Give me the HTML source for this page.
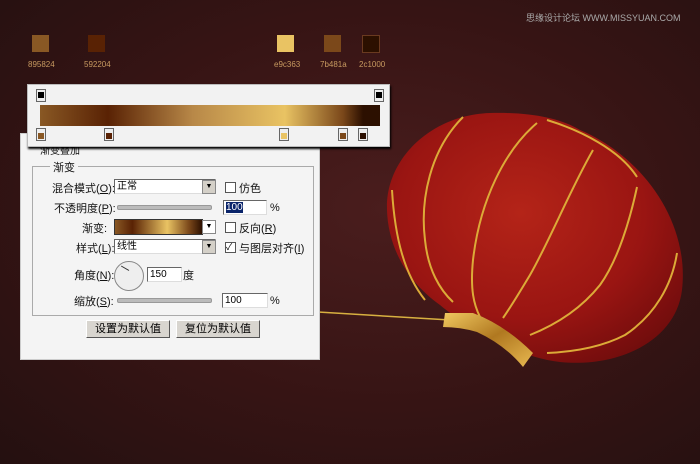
<!DOCTYPE html>
<html><head><meta charset="utf-8"><style>
body{margin:0;width:700px;height:464px;overflow:hidden;background:radial-gradient(ellipse at 55% 45%,#4a1d1d 0%,#361414 55%,#241010 100%);font-family:"Liberation Sans","Noto Sans CJK SC",sans-serif;position:relative}
.a{position:absolute}
.sw{width:17px;height:17px}
.lb{font-size:8px;color:#c89a60}
.t{font-size:11px;color:#111;position:absolute;white-space:nowrap}
.in{position:absolute;background:#fff;border:1px solid #666;border-right-color:#ddd;border-bottom-color:#ddd;font-size:10px;line-height:13px;padding-left:2px}
.dd{position:absolute;width:12px;height:12px;background:#d4d0c8;border:1px solid #888;font-size:7px;text-align:center;line-height:12px}
.cb{position:absolute;width:9px;height:9px;border:1px solid #555;background:#fff;font-size:9px;line-height:9px}
.sl{position:absolute;height:3px;background:#bbb;border:1px solid #999;border-radius:2px}
.btn{position:absolute;height:16px;background:#d8d5cf;border:1px solid #fff;border-right-color:#555;border-bottom-color:#555;font-size:11px;text-align:center;line-height:16px}
.stop{position:absolute;width:8px;height:11px;background:#eee;border:1px solid #666}
.stop i{position:absolute;left:1px;top:4px;width:6px;height:6px}
</style></head><body>
<div class="a sw" style="left:32px;top:35px;background:#895824"></div><div class="a lb" style="left:28px;top:60px">895824</div>
<div class="a sw" style="left:88px;top:35px;background:#592204"></div><div class="a lb" style="left:84px;top:60px">592204</div>
<div class="a sw" style="left:277px;top:35px;background:#e9c363"></div><div class="a lb" style="left:274px;top:60px">e9c363</div>
<div class="a sw" style="left:324px;top:35px;background:#7b481a"></div><div class="a lb" style="left:320px;top:60px">7b481a</div>
<div class="a sw" style="left:362px;top:35px;background:#2c1000;border:1px solid #6a3a20;width:16px;height:16px"></div><div class="a lb" style="left:359px;top:60px">2c1000</div>
<div class="a" style="left:526px;top:11px;font-size:9px;color:#aaa">思缘设计论坛 WWW.MISSYUAN.COM</div>

<svg class="a" style="left:0;top:0" width="700" height="464">
<defs>
<radialGradient id="r" cx="0.45" cy="0.4" r="0.7"><stop offset="0" stop-color="#b42418"/><stop offset="0.6" stop-color="#9a1512"/><stop offset="1" stop-color="#6e0c0c"/></radialGradient>
<linearGradient id="g" x1="0" y1="0" x2="1" y2="1"><stop offset="0" stop-color="#f0c860"/><stop offset="0.5" stop-color="#b07820"/><stop offset="1" stop-color="#e8b850"/></linearGradient>
</defs>
<line x1="318" y1="312" x2="450" y2="320" stroke="#d8b040" stroke-width="1.5"/>
<path d="M387,210 C385,160 430,115 490,113 C530,112 560,118 580,130 C640,155 690,220 682,290 C676,340 620,368 560,362 C520,358 470,330 440,305 C405,280 388,245 387,210 Z" fill="url(#r)"/>
<g fill="none" stroke="#dcaa38" stroke-width="2">
<path d="M547,120 C580,130 620,150 637,177"/>
<path d="M392,190 C395,240 405,275 425,300"/>
<path d="M463,117 C430,150 420,200 425,240 C428,270 440,290 453,302"/>
<path d="M537,123 C505,150 480,200 473,260 C470,290 474,305 480,317"/>
<path d="M593,150 C570,190 550,240 530,275 C518,295 510,308 503,318"/>
<path d="M637,187 C630,220 618,260 600,285 C580,310 555,325 530,335"/>
<path d="M677,253 C672,285 655,315 625,335 C600,348 570,352 547,353"/>
</g>
<path d="M445,313 L473,313 Q505,325 533,353 L523,367 Q505,345 477,332 Q460,327 443,327 Z" fill="url(#g)"/>
</svg>

<div class="a" style="left:20px;top:133px;width:298px;height:225px;background:#f4f4f4;border:1px solid #ccc"></div>
<div class="t" style="left:40px;top:142px;font-size:10px">渐变叠加</div>
<div class="a" style="left:32px;top:166px;width:280px;height:148px;border:1px solid #aaa"></div>
<div class="t" style="left:50px;top:159px;background:#f4f4f4;padding:0 3px">渐变</div>
<div class="t" style="left:52px;top:180px">混合模式(<u>O</u>):</div>
<div class="in" style="left:114px;top:179px;width:98px">正常</div><div class="dd" style="left:202px;top:180px">▼</div>
<div class="cb" style="left:225px;top:182px"></div><div class="t" style="left:239px;top:180px">仿色</div>
<div class="t" style="left:54px;top:200px">不透明度(<u>P</u>):</div>
<div class="sl" style="left:117px;top:205px;width:93px"></div>
<div class="in" style="left:223px;top:200px;width:40px"><span style="background:#0a246a;color:#fff">100</span></div><div class="t" style="left:270px;top:202px">%</div>
<div class="t" style="left:82px;top:220px">渐变:</div>
<div class="a" style="left:114px;top:219px;width:87px;height:14px;border:1px solid #333;background:linear-gradient(90deg,#895824,#592204 20%,#e9c363 60%,#7b481a 85%,#2c1000)"></div>
<div class="dd" style="left:202px;top:220px;background:#fff">▼</div>
<div class="cb" style="left:225px;top:222px"></div><div class="t" style="left:239px;top:220px">反向(<u>R</u>)</div>
<div class="t" style="left:76px;top:240px">样式(<u>L</u>):</div>
<div class="in" style="left:114px;top:239px;width:98px">线性</div><div class="dd" style="left:202px;top:240px">▼</div>
<div class="cb" style="left:225px;top:242px">✓</div><div class="t" style="left:239px;top:240px">与图层对齐(<u>I</u>)</div>
<div class="t" style="left:74px;top:267px">角度(<u>N</u>):</div>
<div class="a" style="left:114px;top:261px;width:28px;height:28px;border-radius:50%;border:1px solid #888;background:#eee"></div>
<div class="a" style="left:120px;top:270px;width:9px;height:1px;background:#333;transform:rotate(30deg);transform-origin:right"></div>
<div class="in" style="left:147px;top:267px;width:31px">150</div><div class="t" style="left:183px;top:267px">度</div>
<div class="t" style="left:74px;top:293px">缩放(<u>S</u>):</div>
<div class="sl" style="left:117px;top:298px;width:93px"></div>
<div class="in" style="left:222px;top:293px;width:42px">100</div><div class="t" style="left:270px;top:295px">%</div>
<div class="btn" style="left:86px;top:320px;width:82px">设置为默认值</div>
<div class="btn" style="left:176px;top:320px;width:82px">复位为默认值</div>

<div class="a" style="left:27px;top:84px;width:361px;height:61px;background:#f2f2f2;border:1px solid #bbb;box-shadow:1px 2px 2px #000"></div>
<div class="a" style="left:40px;top:105px;width:340px;height:21px;background:linear-gradient(90deg,#895824 0%,#592204 20%,#b88848 45%,#e9c363 72%,#7b481a 89%,#2c1000 95%,#2c1000)"></div>
<div class="stop" style="left:36px;top:89px"><i style="top:2px;background:#000"></i></div>
<div class="stop" style="left:374px;top:89px"><i style="top:2px;background:#000"></i></div>
<div class="stop" style="left:36px;top:128px"><i style="background:#895824"></i></div>
<div class="stop" style="left:104px;top:128px"><i style="background:#592204"></i></div>
<div class="stop" style="left:279px;top:128px"><i style="background:#e9c363"></i></div>
<div class="stop" style="left:338px;top:128px"><i style="background:#7b481a"></i></div>
<div class="stop" style="left:358px;top:128px"><i style="background:#2c1000"></i></div>
</body></html>
